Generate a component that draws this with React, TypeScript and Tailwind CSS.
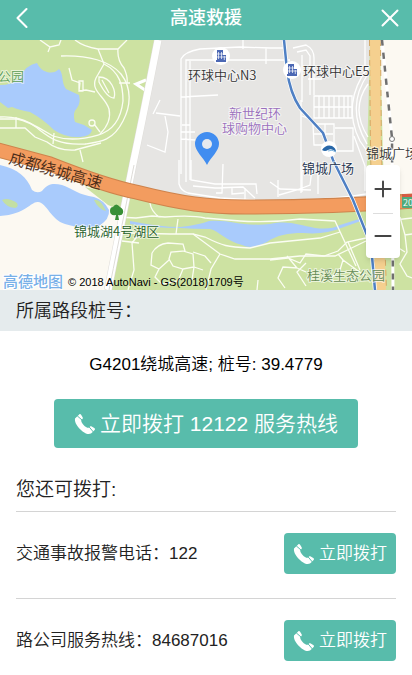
import { ChevronLeft, Minus, Plus, X } from "lucide-react";

const FONT = "font-['Liberation_Sans','Noto_Sans_CJK_SC',sans-serif]";

const HOTLINES = [
    { label: "交通事故报警电话：", phone: "122" },
    { label: "路公司服务热线：", phone: "84687016" },
];

function PhoneIcon() {
    return (
        <svg viewBox="0 0 22 22" className="size-[22px] shrink-0" fill="currentColor" aria-hidden="true">
            <path d="M1 5.6 5.2 1.4C5.9.8 6.6 1 7.1 1.8L8.6 4.3C9 5 8.900 5.700 8.300 6.200L7.200 7.200C6.900 10 11.700 15 14.700 14.800L15.800 13.800C16.300 13.300 17 13.200 17.700 13.600L20.300 15.100C21.100 15.600 21.200 16.400 20.600 17L18.700 19C16.600 21.800 12.800 21.600 8.600 18.400C3.500 14.400 .3 9.400 1 5.600Z" />
            <path d="M3.200 2.800 8.200 7.200M14.700 13.400 19.400 19" stroke="#58bcab" strokeWidth="1" />
        </svg>
    );
}

function BuildingMarker({ x, y }: { x: number; y: number }) {
    return (
        <g transform={`translate(${x} ${y})`}>
            <circle r="9" fill="#fff" />
            <path d="M-4-6H2V-1H5V6H-5V4H-4Z" fill="#4c68b4" />
            <path d="M-2.500-4V3M.5-4V3M-4-2H2M-4 1H5M3.300 0V4" stroke="#fff" strokeWidth="0.700" />
        </g>
    );
}

function MapView() {
    return (
        <svg
            viewBox="0 0 412 250"
            className="block w-full font-['Noto_Sans_CJK_SC',sans-serif]"
            fill="none"
            role="img"
            aria-label="地图"
        >
            {/* land */}
            <path d="M0 0H412V250H0Z" fill="#cde2a2" />
            <path d="M160 0H370L366 160Q300 164 240 164Q180 162 130 148Z" fill="#e6e5e3" />
            <path d="M380 0H412V154H384Z" fill="#fcf9f2" />
            <path d="M0 118 50 131 96 150 122 162 105 250H0Z" fill="#fcf9f2" />
            <path d="M85 147 128 158 125 172 108 165Z" fill="#cde2a2" />

            {/* lakes */}
            <g fill="#a9cbfc">
                <path d="M0 45Q12 45 18 39Q27 24 37 23Q40 30 47 32Q54 34 59 29C64 34 61 43 66 49L79 55Q81 63 77 68Q72 73 75 82L84 85 92 90Q91 96 80 97Q66 98 54 90Q43 79 30 72Q19 70 12 67L8 68 0 62Z" />
                <path d="M0 125C18 129 27 137 32 150Q37 154 42 151C48 143 54 143 62 145C73 149 79 155 94 157Q104 160 109 170Q110 179 99 186Q84 190 65 184C51 180 47 163 38 162C31 161 27 174 0 176Z" />
                <path d="M130 181Q160 187 180 187Q198 185 209 181C230 179 242 187 270 184C288 180 299 185 315 188Q331 190 340 185L359 179 361 181 341 188Q325 195 303 193C288 193 277 195 267 202Q252 210 242 205C226 201 219 191 210 189Q194 189 180 188Q154 188 130 184Z" />
            </g>
            <g fill="#c3dfa4">
                <path d="M2 160Q8 157 17 163Q19 167 15 168Q6 167 2 160Z" />
                <path d="M94 160Q100 158 106 171Q98 169 94 160Z" />
            </g>

            {/* paths inside the parks */}
            <g stroke="#fbfdf3" strokeWidth="1.300">
                <path d="M40 0 50 7 59 5 61 0M50 7 48 12M75 0Q84 7 98 9L118 9 127 0M98 9 104 24M118 9Q117 20 124 28 128 37 127 43M119 43H130" />
                <path d="M61 16C88 15 110 21 121 34C132 48 131 66 123 81C113 101 100 102 85 104C52 106 46 93 30 83Q17 76 0 77" />
                <path d="M104 24C120 32 123 46 123 61C121 79 112 91 98 95C81 100 65 100 53 96C41 89 29 81 17 79L0 79M0 88H16L25 88 35 97 47 102Q58 111 75 110L101 103M16 77V88M54 93 53 104M80 110 83 122" />
                <path d="M104 24 96 38C90 51 105 56 109 69Q112 82 100 94M99 37C112 37 116 52 114 58Q107 58 99 42ZM102 40 109 53M69 28 72 40 80 43 79 51 86 50 95 52M79 41H83V51H79ZM94 84 100 92" />
                <circle cx="92" cy="83" r="3" />
                <path d="M118 177 136 178 152 176 165 177Q192 175 205 178L240 181Q270 183 300 179L335 181 356 226M150 163Q151 171 159 177M178 179 176 194M130 193 170 194 193 194 205 197C223 206 227 207 250 208L270 203 320 198 340 192" />
                <path d="M193 194 220 214 235 219 270 219 300 216 335 216 366 201M220 214 211 229 206 250M152 213Q157 204 168 203L183 204 185 211 171 212 169 219 173 226 183 229 194 227 193 214 183 211M152 213 151 225 159 229 169 220M159 229 155 237 162 244 178 241 183 229M193 212 205 216 211 223M194 227 203 230M194 227 192 240" />
                <path d="M139 194 132 203 134 230 128 250M122 201 139 203M258 240 257 250M270 220 288 218 300 223 306 214 324 216 338 211 347 202 366 198M287 216 297 228 283 227 278 238 285 248M297 228 306 232M338 214 343 220 340 230 331 238M348 202 360 230M343 220 365 236M306 223 297 232 306 246M400 177 405 195 412 194M405 195 407 212 400 224 407 236 412 238M386 181 412 178M386 200 405 212" />
            </g>

            {/* streets around the mall */}
            <g stroke="#fff" strokeWidth="1.300">
                <path d="M181 134V19Q184 12 200 9L240 7 270 8H284M186 142V20H240L270 20H290M190 21V140M220 8V18M243 0V9M266 8V24M156 73 180 76M160 60 153 74M165 76 168 92 165 112 147 105M181 57 218 55M182 85H190M181 92H195M181 99 195 100" />
                <path d="M179 120V144Q181 151 188 153L220 158 255 160M191 120V140L215 144 256 144 257 154M193 146 215 148 243 147 255 158M223 124 222 153 216 153M232 147V154L244 153M245 148V160M366 154Q330 160 270 161M293 8 306 5Q314 9 314 18V55M297 12 306 10 310 16V55M302 15V62M308 39H322" />
                <path d="M314 56H352V78H314ZM319 56V78M324 56V78M329 56V78M334 56V78M339 56V78M344 56V78M348 56V78M314 67H352M313 84H334V105H314ZM313 94H333M325 84V98M335 88H353V111H335M301 60V153M302 76 313 80" />
                <path d="M368 34Q345 67 367 104M368 44Q350 69 368 97M368 27Q341 64 360 101L369 114M354 96 365 126V151M305 121 302 132 302 152M313 121 310 145 297 150 279 155M318 132V154M270 142 280 149 311 150M278 140V157" />
                <path d="M365 0V30" />
            </g>
            <path d="M146 40 136 44 145 50" stroke="#fff" strokeWidth="3" />

            {/* arterial road */}
            <path d="M158 0Q142 82 133 124Q126 160 108 250" stroke="#dedcd8" strokeWidth="8" />
            <path d="M158 0Q142 82 133 124Q126 160 108 250" stroke="#fff" strokeWidth="7" />
            <path d="M134 125Q127 160 109 250" stroke="#dedcd8" strokeWidth="1" />

            {/* motorway under construction */}
            <path d="M375 0 376 115 378 170 381 250" stroke="#d4a866" strokeWidth="12" strokeDasharray="6 4" />
            <path d="M375 0 376 115 378 170 381 250" stroke="#f5d08f" strokeWidth="10" />

            {/* ring expressway */}
            <path d="M-2 110 50 124Q106 146 136 152C184 164 208 167 245 167Q330 167 414 161" stroke="#ce834c" strokeWidth="15" />
            <path d="M-2 110 50 124Q106 146 136 152C184 164 208 167 245 167Q330 167 414 161" stroke="#f39c5f" strokeWidth="13" />

            {/* railway */}
            <path d="M382 0Q386 40 392 98L393 250" stroke="#fff" strokeWidth="3" />
            <path d="M382 0Q386 40 392 98L393 250" stroke="#707070" strokeWidth="2.500" strokeDasharray="6 7" />
            <circle cx="392" cy="99" r="2.500" fill="#fff" stroke="#777" />

            {/* metro */}
            <path d="M284 0 287 30Q290 53 300 68L323 93 333 120 353 160 371 205 375 250" stroke="#fff" strokeWidth="4" />
            <path d="M284 0 287 30Q290 53 300 68L323 93 333 120 353 160 371 205 375 250" stroke="#4f80c4" strokeWidth="2.500" />
            <circle cx="329" cy="109" r="8" fill="#fff" />
            <path d="M322 110Q326 104 332 106Q336 108 336 112Q332 108 328 110Q325 112 322 110Z" fill="#2867a8" />
            <path d="M328 111Q332 109 336 112" stroke="#7fb6e0" strokeWidth="1" />

            <BuildingMarker x={221} y={16} />
            <BuildingMarker x={292} y={30} />

            {/* park tree */}
            <path d="M115 180 116 175Q110 176 110 171Q110 167 113 167Q116 162 120 167Q124 169 123 173Q122 176 118 175L119 180Z" fill="#398f36" />

            {/* labels */}
            <g fontSize="13" fontWeight="350" stroke="#fff" strokeOpacity="0.600" strokeWidth="2" paintOrder="stroke">
                <text x="-2" y="41" fill="#5b9d56">公园</text>
                <text x="188" y="40" fill="#333">环球中心N3</text>
                <text x="303" y="36" fill="#333">环球中心E5</text>
                <g fill="#9a6fbd" className={FONT}>
                    <text x="229" y="78">新世纪环</text>
                    <text x="222" y="93">球购物中心</text>
                </g>
                <text x="302" y="133" fill="#22304c">锦城广场</text>
                <text x="366" y="118" fill="#333">锦城广场</text>
                <text x="74" y="196" fill="#26602a">锦城湖4号湖区</text>
                <text x="307" y="240" fill="#658a54">桂溪生态公园</text>
            </g>
            <text x="8" y="123" fontSize="16" fontWeight="350" fill="#4a2c18" transform="rotate(16 8 123)">成都绕城高速</text>

            {/* location pin */}
            <path d="M207 125C203 117 195 111 195 104A12 12 0 1 1 219 104C219 111 211 117 207 125Z" fill="#418df0" />
            <circle cx="207" cy="104" r="5" fill="#e6e9ee" />

            {/* road shield */}
            <rect x="402" y="155" width="16" height="13" rx="1" fill="#4fac7d" />
            <path d="M402 154H412V157H402Z" fill="#d55b44" />
            <text x="403" y="166" fontSize="9" fill="#fff">20</text>

            <text x="3" y="247" fontSize="15" fontWeight="500" fill="#78b0e8" stroke="#fff" strokeWidth="2" paintOrder="stroke">高德地图</text>
            <text x="68" y="246" fontSize="11" fill="#000" className={FONT}>© 2018 AutoNavi - GS(2018)1709号</text>
        </svg>
    );
}

export default function App() {
    return (
        <div className={`w-full bg-white font-[350] text-[#222] ${FONT}`}>
            <header className="flex h-10 items-center justify-between bg-[#58bcab] px-1 pb-1 text-white">
                <button type="button" aria-label="返回" className="flex w-9 justify-center">
                    <ChevronLeft size={36} strokeWidth={1.4} />
                </button>
                <h1 className="text-lg leading-7 font-medium">高速救援</h1>
                <button type="button" aria-label="关闭" className="flex w-9 justify-center">
                    <X size={30} strokeWidth={1.6} />
                </button>
            </header>

            <div className="relative">
                <MapView />
                <div className="absolute right-3 bottom-8 flex w-[34px] flex-col items-center rounded bg-white text-[#444] shadow-md">
                    <button type="button" aria-label="放大" className="flex h-12 items-center">
                        <Plus size={26} strokeWidth={1.8} />
                    </button>
                    <div className="h-px w-5 bg-[#ddd]" />
                    <button type="button" aria-label="缩小" className="flex h-11 items-center">
                        <Minus size={26} strokeWidth={1.8} />
                    </button>
                </div>
            </div>

            <h2 className="bg-[#e5ebed] px-4 pt-[9px] pb-2 text-lg leading-6">所属路段桩号：</h2>

            <section className="flex flex-col items-center pt-5 pb-7">
                <p className="text-[17px] leading-7 text-black">G4201绕城高速; 桩号: 39.4779</p>
                <a
                    href="tel:12122"
                    className="mt-5 flex items-center gap-1 rounded bg-[#58bcab] px-5 pt-[9px] pb-2 text-[21px] leading-8 text-white"
                >
                    <PhoneIcon />
                    立即拨打 12122 服务热线
                </a>
            </section>

            <section className="px-4">
                <h2 className="pb-[7px] text-[19px] leading-7">您还可拨打:</h2>
                <ul>
                    {HOTLINES.map((item) => (
                        <li
                            key={item.phone}
                            className="flex items-center justify-between border-t border-[#d4d4d4] pt-[21px] pb-6 text-[17px] leading-6"
                        >
                            <span>
                                {item.label}
                                {item.phone}
                            </span>
                            <a
                                href={`tel:${item.phone}`}
                                className="flex items-center gap-1 rounded bg-[#58bcab] px-[9px] pt-[9px] pb-2 text-white"
                            >
                                <PhoneIcon />
                                立即拨打
                            </a>
                        </li>
                    ))}
                </ul>
            </section>
        </div>
    );
}
